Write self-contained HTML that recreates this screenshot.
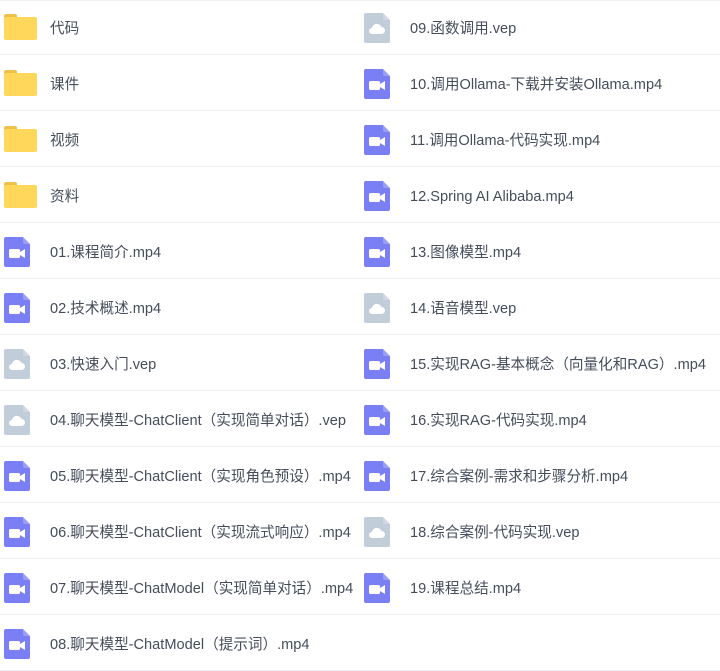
<!DOCTYPE html>
<html><head><meta charset="utf-8"><style>
body{margin:0;width:720px;height:669px;background:#fff;overflow:hidden;font-family:"Liberation Sans","Noto Sans CJK SC",sans-serif;position:relative}
.line{position:absolute;left:0;width:720px;height:1px;background:#eef0f4}
.it{position:absolute;height:56px;font-size:14.6px;color:#454d5a;white-space:nowrap}
.it svg{position:absolute;top:15px}
.it span{position:absolute;top:21px;line-height:20px}
</style></head><body>
<div class="line" style="top:0"></div>
<div id="c"></div>
<script>
var L=[["f","代码"],["f","课件"],["f","视频"],["f","资料"],["v","01.课程简介.mp4"],["v","02.技术概述.mp4"],["c","03.快速入门.vep"],["c","04.聊天模型-ChatClient（实现简单对话）.vep"],["v","05.聊天模型-ChatClient（实现角色预设）.mp4"],["v","06.聊天模型-ChatClient（实现流式响应）.mp4"],["v","07.聊天模型-ChatModel（实现简单对话）.mp4"],["v","08.聊天模型-ChatModel（提示词）.mp4"]];
var R=[["c","09.函数调用.vep"],["v","10.调用Ollama-下载并安装Ollama.mp4"],["v","11.调用Ollama-代码实现.mp4"],["v","12.Spring AI Alibaba.mp4"],["v","13.图像模型.mp4"],["c","14.语音模型.vep"],["v","15.实现RAG-基本概念（向量化和RAG）.mp4"],["v","16.实现RAG-代码实现.mp4"],["v","17.综合案例-需求和步骤分析.mp4"],["c","18.综合案例-代码实现.vep"],["v","19.课程总结.mp4"]];
function icon(t){
if(t=="f")return '<svg width="34" height="30" style="top:16px" viewBox="0 0 34 30"><rect x="0" y="0" width="13" height="8" rx="2" fill="#eec24a"/><rect x="0" y="3" width="33" height="23" rx="2" fill="#ffd75a"/></svg>';
var col=t=="v"?"#7b7ff5":"#c1cdd8";
var s='<svg width="26" height="30" viewBox="0 0 26 30"><path d="M2 0h17l7 7v21a2 2 0 0 1-2 2H2a2 2 0 0 1-2-2V2a2 2 0 0 1 2-2z" fill="'+col+'"/><path d="M19 0v5a2 2 0 0 0 2 2h5z" fill="#fff" opacity=".25"/>';
if(t=="v")s+='<rect x="5" y="12" width="11" height="9" rx="1.5" fill="#fff"/><path d="M16 15l5-3v9l-5-3z" fill="#fff"/>';
else s+='<path d="M8 21a3 3 0 0 1 0-6 5 5 0 0 1 9.5-1 3.5 3.5 0 0 1 0 7z" fill="#fff"/>';
return s+'</svg>';}
var h='';
L.forEach(function(a,i){var y=-2+56*i;h+='<div class="it" style="left:4px;top:'+y+'px">'+icon(a[0])+'<span style="left:46px">'+a[1]+'</span></div><div class="line" style="top:'+(54+56*i)+'px"></div>';});
R.forEach(function(a,i){var y=-2+56*i;h+='<div class="it" style="left:364px;top:'+y+'px">'+icon(a[0])+'<span style="left:46px">'+a[1]+'</span></div>';});
document.getElementById('c').innerHTML=h;
</script>
</body></html>
